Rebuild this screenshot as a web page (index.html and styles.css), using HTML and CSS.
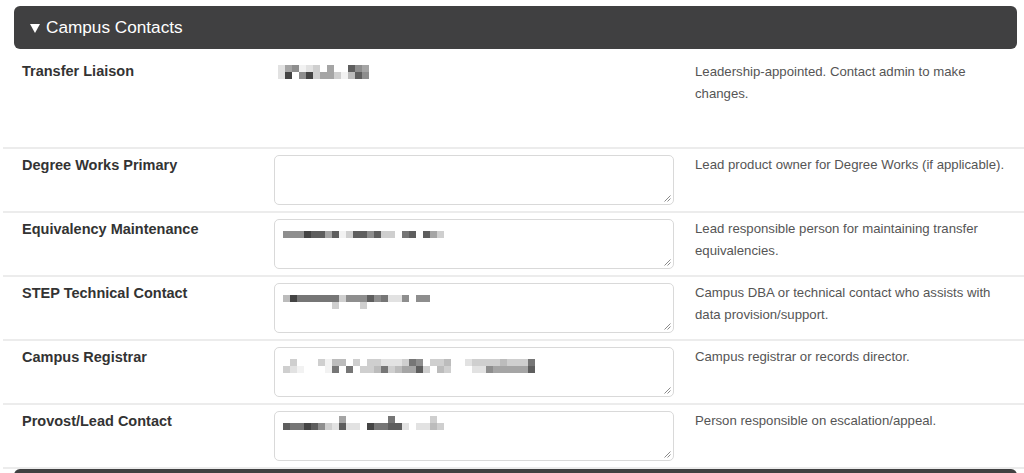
FILE: index.html
```html
<!DOCTYPE html>
<html lang="en">
<head>
<meta charset="utf-8">
<title>Campus Contacts</title>
<link rel="stylesheet" href="styles.css">
</head>
<body>
<section class="section">
  <div class="section-header">
    <svg class="caret" width="10" height="9" viewBox="0 0 10 9"><polygon points="0,0 10,0 5,9" fill="#fff"/></svg>
    <span>Campus Contacts</span>
  </div>
  <div class="rows">
    <div class="row row-first">
      <div class="label">Transfer Liaison</div>
      <div class="value">
        <div class="pix pix-plain">
          <div class="pr"><i class="p2"></i><i class="p5"></i><i class="p6"></i><i class="p1"></i><i class="p2"></i><i class="p3"></i><i class="p0"></i><i class="p5"></i><i class="p0"></i><i class="p0"></i><i class="p8"></i><i class="p6"></i><i class="p5"></i></div>
          <div class="pr"><i class="p2"></i><i class="p9"></i><i class="p0"></i><i class="p6"></i><i class="p9"></i><i class="p3"></i><i class="p5"></i><i class="p5"></i><i class="p3"></i><i class="p1"></i><i class="p4"></i><i class="p8"></i><i class="p6"></i></div>
        </div>
      </div>
      <div class="desc">Leadership-appointed. Contact admin to make changes.</div>
    </div>

    <div class="row">
      <div class="label">Degree Works Primary</div>
      <div class="value"><div class="textbox"><svg class="grip" width="8" height="8" viewBox="0 0 8 8"><path d="M7.5 1.5 L1.5 7.5 M7.5 4.5 L4.5 7.5" stroke="#8a8a8a" stroke-width="1"/></svg></div></div>
      <div class="desc">Lead product owner for Degree Works (if applicable).</div>
    </div>

    <div class="row">
      <div class="label">Equivalency Maintenance</div>
      <div class="value"><div class="textbox">
        <div class="pix">
          <div class="pr"></div>
          <div class="pr"><i class="p6"></i><i class="p6"></i><i class="p6"></i><i class="p9"></i><i class="p8"></i><i class="p8"></i><i class="p5"></i><i class="p8"></i><i class="p1"></i><i class="p3"></i><i class="p8"></i><i class="p8"></i><i class="p6"></i><i class="p8"></i><i class="p3"></i><i class="p3"></i><i class="p0"></i><i class="p7"></i><i class="p8"></i><i class="p0"></i><i class="p8"></i><i class="p5"></i><i class="p3"></i></div>
        </div>
        <svg class="grip" width="8" height="8" viewBox="0 0 8 8"><path d="M7.5 1.5 L1.5 7.5 M7.5 4.5 L4.5 7.5" stroke="#8a8a8a" stroke-width="1"/></svg>
      </div></div>
      <div class="desc">Lead responsible person for maintaining transfer equivalencies.</div>
    </div>

    <div class="row">
      <div class="label">STEP Technical Contact</div>
      <div class="value"><div class="textbox">
        <div class="pix">
          <div class="pr"></div>
          <div class="pr"><i class="p4"></i><i class="p9"></i><i class="p7"></i><i class="p7"></i><i class="p7"></i><i class="p7"></i><i class="p7"></i><i class="p7"></i><i class="p3"></i><i class="p6"></i><i class="p6"></i><i class="p6"></i><i class="p8"></i><i class="p6"></i><i class="p7"></i><i class="p2"></i><i class="p2"></i><i class="p6"></i><i class="p0"></i><i class="p6"></i><i class="p6"></i></div>
          <div class="pr"><i class="p0"></i><i class="p0"></i><i class="p0"></i><i class="p0"></i><i class="p0"></i><i class="p0"></i><i class="p0"></i><i class="p3"></i><i class="p0"></i><i class="p0"></i><i class="p0"></i><i class="p3"></i></div>
        </div>
        <svg class="grip" width="8" height="8" viewBox="0 0 8 8"><path d="M7.5 1.5 L1.5 7.5 M7.5 4.5 L4.5 7.5" stroke="#8a8a8a" stroke-width="1"/></svg>
      </div></div>
      <div class="desc">Campus DBA or technical contact who assists with data provision/support.</div>
    </div>

    <div class="row">
      <div class="label">Campus Registrar</div>
      <div class="value"><div class="textbox">
        <div class="pix">
          <div class="pr"></div>
          <div class="pr"><i class="p0"></i><i class="p3"></i><i class="p0"></i><i class="p0"></i><i class="p0"></i><i class="p3"></i><i class="p1"></i><i class="p4"></i><i class="p4"></i><i class="p0"></i><i class="p3"></i><i class="p0"></i><i class="p3"></i><i class="p3"></i><i class="p2"></i><i class="p2"></i><i class="p2"></i><i class="p3"></i><i class="p7"></i><i class="p6"></i><i class="p0"></i><i class="p3"></i><i class="p3"></i><i class="p4"></i><i class="p0"></i><i class="p0"></i><i class="p2"></i><i class="p3"></i><i class="p3"></i><i class="p3"></i><i class="p3"></i><i class="p4"></i><i class="p3"></i><i class="p3"></i><i class="p3"></i><i class="p7"></i></div>
          <div class="pr"><i class="p3"></i><i class="p2"></i><i class="p1"></i><i class="p0"></i><i class="p0"></i><i class="p0"></i><i class="p1"></i><i class="p7"></i><i class="p0"></i><i class="p7"></i><i class="p0"></i><i class="p3"></i><i class="p3"></i><i class="p4"></i><i class="p7"></i><i class="p3"></i><i class="p4"></i><i class="p5"></i><i class="p5"></i><i class="p8"></i><i class="p3"></i><i class="p0"></i><i class="p4"></i><i class="p3"></i><i class="p0"></i><i class="p0"></i><i class="p0"></i><i class="p2"></i><i class="p2"></i><i class="p6"></i><i class="p5"></i><i class="p5"></i><i class="p5"></i><i class="p5"></i><i class="p5"></i><i class="p8"></i></div>
        </div>
        <svg class="grip" width="8" height="8" viewBox="0 0 8 8"><path d="M7.5 1.5 L1.5 7.5 M7.5 4.5 L4.5 7.5" stroke="#8a8a8a" stroke-width="1"/></svg>
      </div></div>
      <div class="desc">Campus registrar or records director.</div>
    </div>

    <div class="row">
      <div class="label">Provost/Lead Contact</div>
      <div class="value"><div class="textbox">
        <div class="pix">
          <div class="pr"><i class="p0"></i><i class="p0"></i><i class="p0"></i><i class="p0"></i><i class="p0"></i><i class="p0"></i><i class="p0"></i><i class="p0"></i><i class="p5"></i><i class="p0"></i><i class="p0"></i><i class="p0"></i><i class="p0"></i><i class="p0"></i><i class="p0"></i><i class="p7"></i><i class="p0"></i><i class="p0"></i><i class="p0"></i><i class="p0"></i><i class="p0"></i><i class="p3"></i></div>
          <div class="pr"><i class="p8"></i><i class="p7"></i><i class="p7"></i><i class="p9"></i><i class="p8"></i><i class="p6"></i><i class="p3"></i><i class="p2"></i><i class="p8"></i><i class="p2"></i><i class="p2"></i><i class="p0"></i><i class="p9"></i><i class="p7"></i><i class="p7"></i><i class="p8"></i><i class="p8"></i><i class="p2"></i><i class="p0"></i><i class="p2"></i><i class="p2"></i><i class="p4"></i><i class="p3"></i></div>
        </div>
        <svg class="grip" width="8" height="8" viewBox="0 0 8 8"><path d="M7.5 1.5 L1.5 7.5 M7.5 4.5 L4.5 7.5" stroke="#8a8a8a" stroke-width="1"/></svg>
      </div></div>
      <div class="desc">Person responsible on escalation/appeal.</div>
    </div>
  </div>
</section>
<section class="section">
  <div class="section-header next-header"></div>
</section>
</body>
</html>
```
FILE: styles.css
```css
html, body {
  margin: 0;
  padding: 0;
  background: #fff;
  overflow: hidden;
}
body {
  padding-top: 6px;
  font-family: "Liberation Sans", Arial, Helvetica, sans-serif;
  color: #333;
}
.section-header {
  margin: 0 7px 0 14px;
  height: 43px;
  box-sizing: border-box;
  background: #404041;
  border-radius: 6px;
  display: flex;
  align-items: center;
  gap: 6px;
  padding-left: 16px;
  color: #fff;
  font-size: 17.2px;
}
.caret {
  display: block;
  margin-top: 1px;
}
.rows {
  margin-left: 3px;
}
.row {
  display: grid;
  grid-template-columns: 252px 421px 1fr;
  padding: 6px 13px 6px 19px;
  border-bottom: 2px solid #ececec;
  box-sizing: border-box;
  height: 64px;
}
.row-first {
  height: 100px;
  padding-top: 12px;
}
.label {
  font-size: 14.5px;
  font-weight: bold;
  line-height: 21px;
  color: #333;
}
.desc {
  font-size: 13.2px;
  line-height: 22px;
  color: #555;
}
.row:not(.row-first) .desc {
  margin-top: -1px;
}
.textbox {
  position: relative;
  width: 400px;
  height: 50px;
  box-sizing: border-box;
  border: 1px solid #d9d9d9;
  border-radius: 5px;
  padding: 4px 8px 0 8px;
  background: #fff;
}
.grip {
  position: absolute;
  right: 2px;
  bottom: 2px;
}
.pix {
  display: flex;
  flex-direction: column;
}
.pix-plain {
  padding: 4px 0 0 4px;
}
.pr {
  display: flex;
  height: 7px;
}
.pr i {
  display: block;
  width: 7px;
  height: 100%;
}
.p0 { background: transparent; }
.p1 { background: #f2f2f2; }
.p2 { background: #e2e2e2; }
.p3 { background: #cfcfcf; }
.p4 { background: #bcbcbc; }
.p5 { background: #a5a5a5; }
.p6 { background: #8e8e8e; }
.p7 { background: #767676; }
.p8 { background: #5e5e5e; }
.p9 { background: #444; }
```
